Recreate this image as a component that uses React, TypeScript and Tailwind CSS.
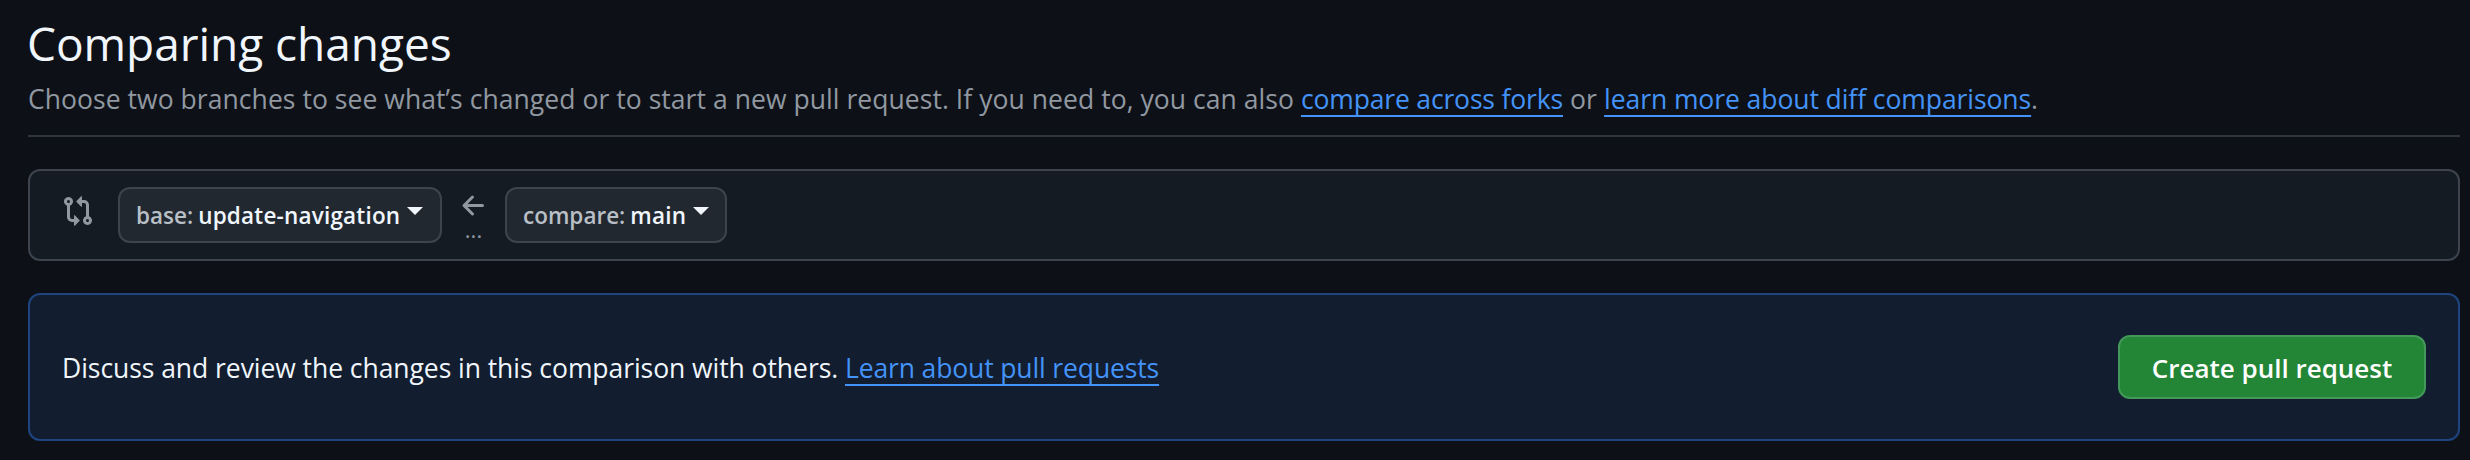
import type { ReactNode } from "react";

function GitCompareIcon() {
  return (
    <svg viewBox="0 0 16 16" className="h-8 w-8 fill-[#9198a1]" aria-hidden="true">
      <path d="M9.573.677A.25.25 0 0 1 10 .854V2.5h1A2.5 2.5 0 0 1 13.5 5v5.628a2.251 2.251 0 1 1-1.5 0V5a1 1 0 0 0-1-1h-1v1.646a.25.25 0 0 1-.427.177L7.177 3.427a.25.25 0 0 1 0-.354ZM6 12v-1.646a.25.25 0 0 1 .427-.177l2.396 2.396a.25.25 0 0 1 0 .354l-2.396 2.396A.25.25 0 0 1 6 15.146V13.5H5A2.5 2.5 0 0 1 2.5 11V5.372a2.25 2.25 0 1 1 1.5 0V11a1 1 0 0 0 1 1ZM4 3.25a.75.75 0 1 0-1.5 0 .75.75 0 0 0 1.5 0ZM12.75 12a.75.75 0 1 0 0 1.5.75.75 0 0 0 0-1.5Z" />
    </svg>
  );
}

function ArrowLeftIcon() {
  return (
    <svg viewBox="0 0 16 16" className="h-8 w-8 fill-[#9198a1]" aria-hidden="true">
      <path d="M7.78 12.53a.75.75 0 0 1-1.06 0L2.47 8.28a.75.75 0 0 1 0-1.06l4.25-4.25a.751.751 0 0 1 1.042.018.751.751 0 0 1 .018 1.042L4.81 7h7.44a.75.75 0 0 1 0 1.5H4.81l2.97 2.97a.75.75 0 0 1 0 1.06Z" />
    </svg>
  );
}

function Caret() {
  return (
    <svg viewBox="0 0 16 8" className="mb-2 ml-[7px] h-2 w-4 fill-[#f0f6fc]" aria-hidden="true">
      <path d="M0 0h16L8 8Z" />
    </svg>
  );
}

function BranchSelect({ label, branch, className }: { label: string; branch: string; className: string }) {
  return (
    <button
      type="button"
      className={`flex h-14 shrink-0 items-center whitespace-nowrap rounded-xl border-2 border-[#3d444d] bg-[#212830] pl-4 text-[22.5px] font-semibold text-[#f0f6fc] ${className}`}
    >
      <span className="mr-[5px] pt-0.5 text-[#b9bfc6]">{label}</span>
      <span className="pt-0.5 tracking-[0.2px]">{branch}</span>
      <Caret />
    </button>
  );
}

function Link({ children, className }: { children: ReactNode; className: string }) {
  return (
    <a
      href="#"
      className={`text-[#4493f8] underline decoration-2 underline-offset-[6px] [text-decoration-skip-ink:none] ${className}`}
    >
      {children}
    </a>
  );
}

export default function App() {
  return (
    <main className="h-[460px] overflow-hidden bg-[#0d1117] pl-7 pr-2.5 pt-[13px] font-['Open_Sans','Noto_Sans',sans-serif] text-[26.5px] text-[#f0f6fc]">
      <header className="border-b-2 border-[#2f353d] pb-[15px]">
        <h1 className="-ml-px text-[46px] leading-[60px] tracking-[-0.04px]">Comparing changes</h1>
        <p className="mt-[5px] whitespace-nowrap leading-[42px] text-[#9198a1]">
          <span className="tracking-[0.053px]">
            Choose two branches to see what’s changed or to start a new pull request. If you need to, you can also{" "}
          </span>
          <Link className="tracking-[-0.165px]">compare across forks</Link>
          <span className="tracking-[0.15px]"> or </span>
          <Link className="tracking-[-0.075px]">learn more about diff comparisons</Link>.
        </p>
      </header>

      <section className="mt-8 flex h-[92px] items-center rounded-xl border-2 border-[#3d444d] bg-[#151b23] pl-8">
        <div className="mb-2 mr-6">
          <GitCompareIcon />
        </div>
        <BranchSelect label="base:" branch="update-navigation" className="w-[324px]" />
        <div className="flex h-14 w-[63px] flex-col items-center pt-[3px] text-[#9198a1]">
          <ArrowLeftIcon />
          <span className="-mt-px text-[22px] leading-4">...</span>
        </div>
        <BranchSelect label="compare:" branch="main" className="w-[222px]" />
      </section>

      <section className="mt-8 flex h-[148px] items-center justify-between rounded-xl border-2 border-[#1f4480] bg-[#121d2f] pl-8 pr-8">
        <p className="whitespace-nowrap pt-[3px]">
          <span className="tracking-[-0.056px]">Discuss and review the changes in this comparison with others. </span>
          <Link className="tracking-[-0.13px]">Learn about pull requests</Link>
        </p>
        <button
          type="button"
          className="flex h-16 w-[308px] items-center justify-center rounded-xl border-2 border-[#44985a] bg-[#238636] pt-0.5 text-[26px] font-semibold text-white"
        >
          Create pull request
        </button>
      </section>
    </main>
  );
}
